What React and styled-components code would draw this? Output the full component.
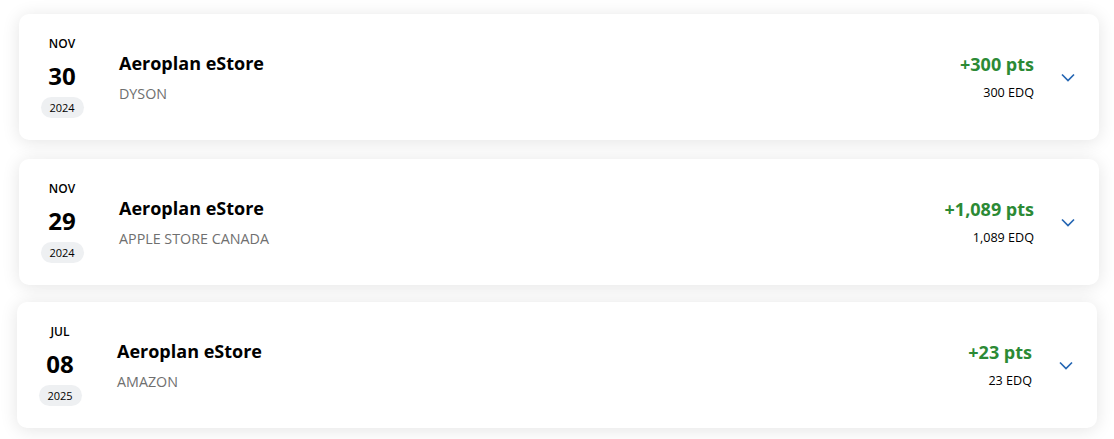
import React from "react";
import styled, { createGlobalStyle } from "styled-components";

const GlobalStyle = createGlobalStyle`
  body {
    margin: 0;
    background: #ffffff;
    font-family: "Open Sans", "Noto Sans", Arial, sans-serif;
  }
`;

const List = styled.div`
  display: flex;
  flex-direction: column;
  padding: 14px 15px 12px 19px;
`;

const Card = styled.div`
  display: flex;
  align-items: center;
  height: 126px;
  box-sizing: border-box;
  padding: 0 23px 0 21px;
  margin-top: ${(p) => p.$gap || 0}px;
  margin-left: ${(p) => p.$nudge || 0}px;
  margin-right: ${(p) => -(p.$nudge || 0)}px;
  background: #ffffff;
  border-radius: 10px;
  box-shadow: 0 2px 18px rgba(0, 0, 0, 0.11);
`;

const DateCol = styled.div`
  width: 44px;
  display: flex;
  flex-direction: column;
  align-items: center;
  color: #000;
`;

const Month = styled.div`
  font-size: 12px;
  font-weight: 600;
  line-height: 16px;
`;

const Day = styled.div`
  font-size: 24px;
  font-weight: 700;
  line-height: 32px;
  margin-top: 8px;
`;

const Year = styled.div`
  margin-top: 5px;
  width: 43px;
  height: 21px;
  border-radius: 11px;
  background: #eef0f2;
  font-size: 11px;
  font-weight: 500;
  line-height: 21px;
  text-align: center;
`;

const Info = styled.div`
  margin-left: 35px;
  display: flex;
  flex-direction: column;
`;

const Title = styled.div`
  font-size: 18px;
  font-weight: 700;
  color: #000;
  line-height: 24px;
`;

const Merchant = styled.div`
  margin-top: 9px;
  font-size: 14.3px;
  color: #6f6f6f;
  text-transform: uppercase;
  line-height: 20px;
`;

const Points = styled.div`
  margin-left: auto;
  display: flex;
  flex-direction: column;
  align-items: flex-end;
`;

const Pts = styled.div`
  font-size: 18px;
  font-weight: 700;
  color: #2c8a35;
  line-height: 24px;
`;

const Edq = styled.div`
  margin-top: 8px;
  font-size: 12.6px;
  color: #000;
  line-height: 18px;
`;

const Toggle = styled.button`
  margin-left: 26px;
  width: 16px;
  height: 16px;
  padding: 0;
  border: 0;
  background: none;
  display: flex;
  align-items: center;
  justify-content: center;
  color: #2566b3;
`;

const Chevron = () => (
  <svg width="14" height="9" viewBox="0 0 14 9" fill="none">
    <path d="M1 1.5l6 6 6-6" stroke="currentColor" strokeWidth="1.7" />
  </svg>
);

const rows = [
  { month: "NOV", day: "30", year: "2024", merchant: "Dyson", pts: "+300 pts", edq: "300 EDQ", gap: 0 },
  { month: "NOV", day: "29", year: "2024", merchant: "Apple Store Canada", pts: "+1,089 pts", edq: "1,089 EDQ", gap: 19 },
  { month: "JUL", day: "08", year: "2025", merchant: "Amazon", pts: "+23 pts", edq: "23 EDQ", gap: 17, nudge: -2 },
];

export default function App() {
  return (
    <>
      <GlobalStyle />
      <List>
        {rows.map((r, i) => (
          <Card key={i} $gap={r.gap} $nudge={r.nudge}>
            <DateCol>
              <Month>{r.month}</Month>
              <Day>{r.day}</Day>
              <Year>{r.year}</Year>
            </DateCol>
            <Info>
              <Title>Aeroplan eStore</Title>
              <Merchant>{r.merchant}</Merchant>
            </Info>
            <Points>
              <Pts>{r.pts}</Pts>
              <Edq>{r.edq}</Edq>
            </Points>
            <Toggle aria-label="Expand">
              <Chevron />
            </Toggle>
          </Card>
        ))}
      </List>
    </>
  );
}
